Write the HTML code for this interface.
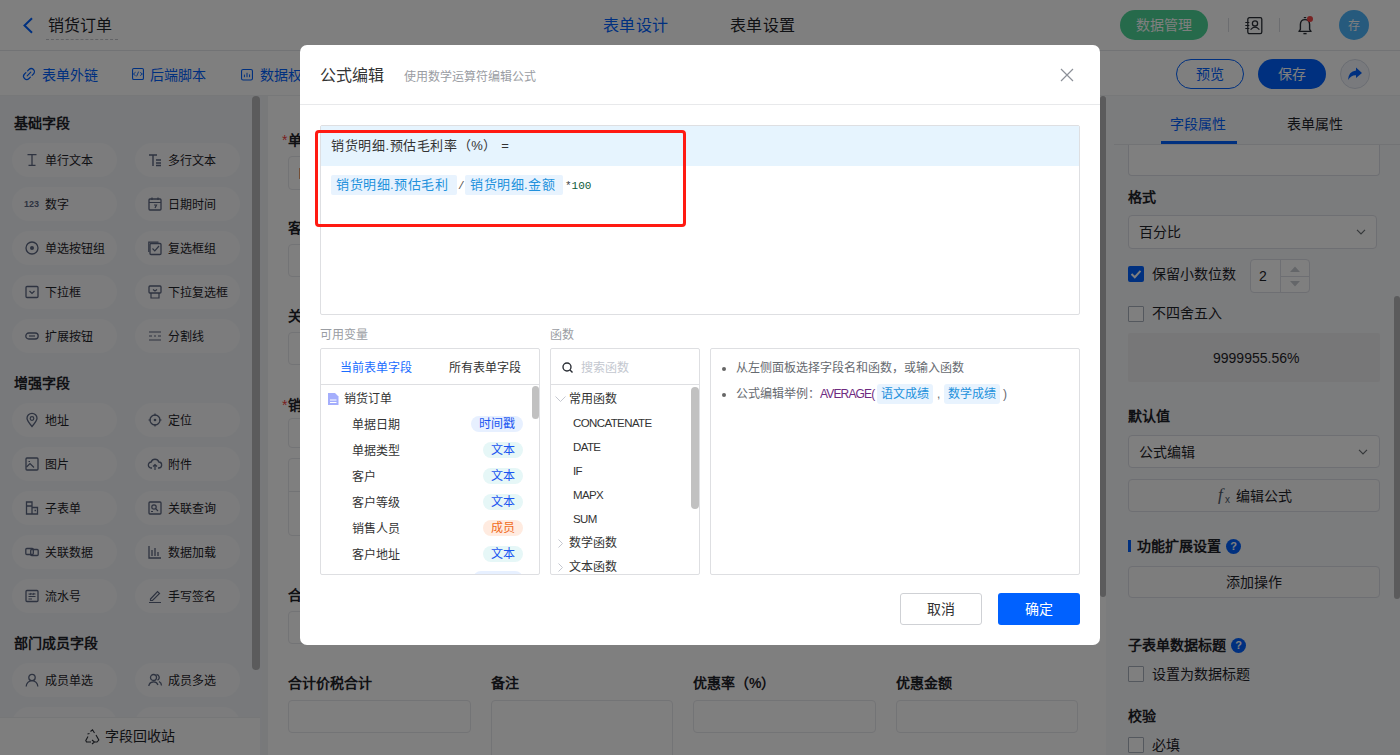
<!DOCTYPE html>
<html lang="zh-CN"><head><meta charset="utf-8">
<style>
*{box-sizing:border-box;margin:0;padding:0}
html,body{width:1400px;height:755px;overflow:hidden;background:#fff;font-family:"Liberation Sans",sans-serif;color:#1f2329}
#app{position:absolute;left:0;top:0;width:1400px;height:755px;background:#fff}
.a{position:absolute}
.t{position:absolute;white-space:nowrap;height:20px;line-height:20px}
#hdr{position:absolute;left:0;top:0;width:1400px;height:51px;background:#fff;border-bottom:1px solid #e4e6ea}
#tb{position:absolute;left:0;top:51px;width:1400px;height:45px;background:#fff;border-bottom:1px solid #eef0f2}
#left{position:absolute;left:0;top:96px;width:262px;height:659px;background:#f1f3f6}
#gap{position:absolute;left:262px;top:96px;width:6px;height:659px;background:#f0f2f5}
#center{position:absolute;left:268px;top:96px;width:838px;height:659px;background:#fff}
#right{position:absolute;left:1106px;top:96px;width:294px;height:659px;background:#f7f8fa}
#mask{position:absolute;left:0;top:0;width:1400px;height:755px;background:rgba(0,0,0,0.5)}
#modal{position:absolute;left:300px;top:45px;width:800px;height:600px;background:#fff;border-radius:7px}
.pill{position:absolute;width:105px;height:34px;border-radius:17px;background:#f8f9fb}
.pill .ic{position:absolute;left:13px;top:10px;width:14px;height:14px}
.pill .tx{position:absolute;left:33px;top:8px;height:20px;line-height:20px;font-size:12px;color:#1f2329;white-space:nowrap}
.sec{position:absolute;left:14px;font-size:14px;font-weight:bold;color:#1f2329;height:20px;line-height:20px}
.lbl{position:absolute;font-size:14px;font-weight:bold;color:#1f2329;height:20px;line-height:20px;white-space:nowrap}
.inp{position:absolute;border:1px solid #e6e8ec;border-radius:4px;background:#fff}
.rinp{position:absolute;border:1px solid #dcdfe6;border-radius:4px;background:#fff}
.cb{position:absolute;left:1128px;width:16px;height:16px;border:1px solid #a9b0bd;border-radius:1px;background:#fff}
svg{position:absolute;overflow:visible}
</style></head><body>
<div id="app">
  <div id="hdr">
    <svg class="a" style="left:22px;top:17px" width="12" height="16" viewBox="0 0 12 16"><path d="M10 1.2 L2.5 8.5 L10 15.8" fill="none" stroke="#0061ff" stroke-width="2"/></svg>
    <div class="t" style="left:48px;top:16px;font-size:16px;color:#1f2329">销货订单</div>
    <div class="a" style="left:46px;top:39px;width:72px;border-top:1px dashed #c4c6cc"></div>
    <div class="t" style="left:603px;top:16px;font-size:16px;letter-spacing:0.3px;color:#0061ff">表单设计</div>
    <div class="t" style="left:730px;top:16px;font-size:16px;letter-spacing:0.3px;color:#1f2329">表单设置</div>
    <div class="a" style="left:1120px;top:10px;width:88px;height:30px;border-radius:15px;background:#4cd497"></div>
    <div class="t" style="left:1136px;top:15px;font-size:14px;color:#fff">数据管理</div>
    <div class="a" style="left:1228px;top:18px;width:1px;height:14px;background:#d9dbe0"></div>
    <svg style="left:1245px;top:17px" width="18" height="18" viewBox="0 0 18 18"><rect x="2.8" y="0.7" width="14" height="16" rx="1.6" fill="none" stroke="#2b2f36" stroke-width="1.3"/><circle cx="10" cy="6.4" r="2.6" fill="none" stroke="#2b2f36" stroke-width="1.3"/><path d="M5.6 12.6 Q10 7.6 14.4 12.6" fill="none" stroke="#2b2f36" stroke-width="1.3"/><path d="M0.3 5.5H4.3M0.3 8.5H4.3M0.3 11.5H4.3" stroke="#2b2f36" stroke-width="1.1"/></svg>
    <div class="a" style="left:1279px;top:18px;width:1px;height:14px;background:#d9dbe0"></div>
    <svg style="left:1297px;top:16px" width="16" height="19" viewBox="0 0 16 19"><path d="M2 15.4 H14 L12.6 13.3 V8.6 Q12.6 3.6 8 3.6 Q3.4 3.6 3.4 8.6 V13.3 Z" fill="none" stroke="#2b2f36" stroke-width="1.4" stroke-linejoin="round"/><path d="M6.4 17.6 H9.6" stroke="#2b2f36" stroke-width="1.4"/><path d="M6.8 1.6 H9.2" stroke="#2b2f36" stroke-width="1.2"/><circle cx="13" cy="3" r="3" fill="#f04646"/></svg>
    <div class="a" style="left:1339px;top:10px;width:30px;height:30px;border-radius:15px;background:#4cb4fb"></div>
    <div class="t" style="left:1348px;top:16px;font-size:12px;color:#fff">存</div>
  </div>
  <div id="tb">
    <svg style="left:22px;top:16px" width="14" height="14" viewBox="0 0 14 14"><path d="M5.6 3.9 L7 2.5 A3.1 3.1 0 0 1 11.5 7 L10.1 8.4 M8.4 10.1 L7 11.5 A3.1 3.1 0 0 1 2.5 7 L3.9 5.6 M5.2 8.8 L8.8 5.2" fill="none" stroke="#0061ff" stroke-width="1.15" stroke-linecap="round"/></svg>
    <div class="t" style="left:42px;top:14px;font-size:14px;color:#0061ff">表单外链</div>
    <svg style="left:132px;top:17px" width="12" height="12" viewBox="0 0 12 12"><rect x="0.55" y="0.55" width="10.9" height="10.9" rx="1.3" fill="none" stroke="#0061ff" stroke-width="1.1"/><path d="M3.6 4.2 L1.4 6 L3.6 7.8 M4.6 8.4 L6.6 3.6 M8.2 4.4 L10.4 6 L8.2 7.6" fill="none" stroke="#0061ff" stroke-width="0.9"/></svg>
    <div class="t" style="left:150px;top:14px;font-size:14px;color:#0061ff">后端脚本</div>
    <svg style="left:241px;top:18px" width="12" height="12" viewBox="0 0 12 12"><rect x="0.55" y="0.55" width="10.9" height="10.4" rx="1.5" fill="none" stroke="#0061ff" stroke-width="1.1"/><path d="M3.4 8.2V5.6M6 8.2V3.8M8.6 8.2V5.4" stroke="#0061ff" stroke-width="1"/></svg>
    <div class="t" style="left:260px;top:14px;font-size:14px;color:#0061ff">数据权限</div>
    <div class="a" style="left:1176px;top:8px;width:68px;height:30px;border-radius:15px;border:1px solid #0061ff;background:#fff"></div>
    <div class="t" style="left:1196px;top:13px;font-size:14px;color:#0061ff">预览</div>
    <div class="a" style="left:1258px;top:8px;width:68px;height:30px;border-radius:15px;background:#0061ff"></div>
    <div class="t" style="left:1278px;top:13px;font-size:14px;color:#fff">保存</div>
    <div class="a" style="left:1340px;top:8px;width:30px;height:30px;border-radius:15px;border:1px solid #d6dbe6;background:#f2f5fa"></div>
    <svg style="left:1347px;top:16px" width="16" height="14" viewBox="0 0 16 14"><path d="M9 0.5 L15 6 L9 11 V8.2 Q4 8 1 13 Q1.5 4.5 9 3.6 Z" fill="#0061ff"/></svg>
  </div>
  <div id="left">
    <div class="sec" style="top:17px">基础字段</div>
    <div class="pill" style="left:12px;top:47px"><svg class="ic" viewBox="0 0 14 14"><path d="M2.5 1.6H11.5M3.5 12.4H10.5M7 1.6V12.4" stroke="#5c6680" stroke-width="1.3" fill="none"/></svg><div class="tx">单行文本</div></div>
    <div class="pill" style="left:135px;top:47px"><svg class="ic" viewBox="0 0 14 14"><path d="M1 2H9M5 2V13M8 7H13M8 10H13M8 12.5H13" stroke="#5c6680" stroke-width="1.4" fill="none"/></svg><div class="tx">多行文本</div></div>
    <div class="pill" style="left:12px;top:91px"><div class="a" style="left:12px;top:9px;font-size:9px;font-weight:bold;color:#5c6680;line-height:16px">123</div><div class="tx">数字</div></div>
    <div class="pill" style="left:135px;top:91px"><svg class="ic" viewBox="0 0 14 14"><rect x="1" y="2" width="12" height="11" rx="1" stroke="#5c6680" stroke-width="1.3" fill="none"/><path d="M1 5.5H13M4 0.5V3M10 0.5V3M6 8H8.5L7 11" stroke="#5c6680" stroke-width="1.2" fill="none"/></svg><div class="tx">日期时间</div></div>
    <div class="pill" style="left:12px;top:135px"><svg class="ic" viewBox="0 0 14 14"><circle cx="7" cy="7" r="6" stroke="#5c6680" stroke-width="1.3" fill="none"/><circle cx="7" cy="7" r="2" fill="#5c6680"/></svg><div class="tx">单选按钮组</div></div>
    <div class="pill" style="left:135px;top:135px"><svg class="ic" viewBox="0 0 14 14"><rect x="2" y="2.5" width="11" height="11" rx="1" stroke="#5c6680" stroke-width="1.3" fill="none"/><path d="M0.8 11V1.2H10.5M4.5 7.5L6.8 9.8L11 5" stroke="#5c6680" stroke-width="1.2" fill="none"/></svg><div class="tx">复选框组</div></div>
    <div class="pill" style="left:12px;top:179px"><svg class="ic" viewBox="0 0 14 14"><rect x="1" y="1.5" width="12" height="11" rx="1" stroke="#5c6680" stroke-width="1.3" fill="none"/><path d="M4.5 6L7 8.5L9.5 6" stroke="#5c6680" stroke-width="1.2" fill="none"/></svg><div class="tx">下拉框</div></div>
    <div class="pill" style="left:135px;top:179px"><svg class="ic" viewBox="0 0 14 14"><rect x="1" y="1" width="12" height="7" rx="1" stroke="#5c6680" stroke-width="1.3" fill="none"/><path d="M3 8V13H11V8M5 4.5L7 6L9 4.5" stroke="#5c6680" stroke-width="1.2" fill="none"/></svg><div class="tx">下拉复选框</div></div>
    <div class="pill" style="left:12px;top:223px"><svg class="ic" viewBox="0 0 14 14"><rect x="0.8" y="4" width="12.4" height="6" rx="3" stroke="#5c6680" stroke-width="1.3" fill="none"/><path d="M4 7H10" stroke="#5c6680" stroke-width="1.2"/></svg><div class="tx">扩展按钮</div></div>
    <div class="pill" style="left:135px;top:223px"><svg class="ic" viewBox="0 0 14 14"><path d="M1 3H13M1 7H4M6 7H8M10 7H13M1 11H13" stroke="#5c6680" stroke-width="1.2"/></svg><div class="tx">分割线</div></div>

    <div class="sec" style="top:277px">增强字段</div>
    <div class="pill" style="left:12px;top:307px"><svg class="ic" viewBox="0 0 14 14"><path d="M7 13.5C3.5 9.5 2 7.5 2 5.3A5 5 0 0 1 12 5.3C12 7.5 10.5 9.5 7 13.5Z" stroke="#5c6680" stroke-width="1.3" fill="none"/><circle cx="7" cy="5.5" r="1.8" stroke="#5c6680" stroke-width="1.2" fill="none"/></svg><div class="tx">地址</div></div>
    <div class="pill" style="left:135px;top:307px"><svg class="ic" viewBox="0 0 14 14"><circle cx="7" cy="7" r="5" stroke="#5c6680" stroke-width="1.3" fill="none"/><circle cx="7" cy="7" r="1.3" fill="#5c6680"/><path d="M7 0.5V3M7 11V13.5M0.5 7H3M11 7H13.5" stroke="#5c6680" stroke-width="1.2"/></svg><div class="tx">定位</div></div>
    <div class="pill" style="left:12px;top:351px"><svg class="ic" viewBox="0 0 14 14"><rect x="1" y="1" width="12" height="12" rx="1" stroke="#5c6680" stroke-width="1.3" fill="none"/><path d="M1.5 10L5 6.5L9 10.5M3.5 4.5H5" stroke="#5c6680" stroke-width="1.2" fill="none"/></svg><div class="tx">图片</div></div>
    <div class="pill" style="left:135px;top:351px"><svg class="ic" viewBox="0 0 14 14"><path d="M4 11H3.5A3 3 0 0 1 3.2 5A4 4 0 0 1 10.8 5A3 3 0 0 1 10.5 11H10" stroke="#5c6680" stroke-width="1.3" fill="none"/><path d="M7 13V7.5M5 9.5L7 7.5L9 9.5" stroke="#5c6680" stroke-width="1.2" fill="none"/></svg><div class="tx">附件</div></div>
    <div class="pill" style="left:12px;top:395px"><svg class="ic" viewBox="0 0 14 14"><path d="M1.5 1V13H7V1ZM1.5 5H7M7 6.5H12.5V13H7M9.5 9.5H11" stroke="#5c6680" stroke-width="1.3" fill="none"/></svg><div class="tx">子表单</div></div>
    <div class="pill" style="left:135px;top:395px"><svg class="ic" viewBox="0 0 14 14"><rect x="1" y="1" width="12" height="12" rx="1" stroke="#5c6680" stroke-width="1.3" fill="none"/><circle cx="6" cy="6" r="2.2" stroke="#5c6680" stroke-width="1.2" fill="none"/><path d="M7.6 7.6L10 10M3 10.5H5" stroke="#5c6680" stroke-width="1.2"/></svg><div class="tx">关联查询</div></div>
    <div class="pill" style="left:12px;top:439px"><svg class="ic" viewBox="0 0 14 14"><rect x="0.8" y="3.5" width="7.5" height="6" rx="1" stroke="#5c6680" stroke-width="1.3" fill="none"/><rect x="5.7" y="4.5" width="7.5" height="6" rx="1" stroke="#5c6680" stroke-width="1.3" fill="none"/></svg><div class="tx">关联数据</div></div>
    <div class="pill" style="left:135px;top:439px"><svg class="ic" viewBox="0 0 14 14"><path d="M1 1V13H13M4 11V5M7 11V3M10 11V7" stroke="#5c6680" stroke-width="1.3" fill="none"/></svg><div class="tx">数据加载</div></div>
    <div class="pill" style="left:12px;top:483px"><svg class="ic" viewBox="0 0 14 14"><rect x="1" y="1.5" width="12" height="11" rx="1" stroke="#5c6680" stroke-width="1.3" fill="none"/><path d="M3.5 5H10.5M3.5 7.5H10.5M3.5 10H7M9 4L8 6M6 4L5 6" stroke="#5c6680" stroke-width="1.1"/></svg><div class="tx">流水号</div></div>
    <div class="pill" style="left:135px;top:483px"><svg class="ic" viewBox="0 0 14 14"><path d="M2.5 10L9.5 2.5L11.5 4.5L4.5 11.5H2.5ZM1 13.5H13" stroke="#5c6680" stroke-width="1.2" fill="none"/></svg><div class="tx">手写签名</div></div>

    <div class="sec" style="top:537px">部门成员字段</div>
    <div class="pill" style="left:12px;top:567px"><svg class="ic" viewBox="0 0 14 14"><circle cx="7" cy="4.5" r="3.2" stroke="#5c6680" stroke-width="1.3" fill="none"/><path d="M1.2 13.5A5.8 5.8 0 0 1 12.8 13.5" stroke="#5c6680" stroke-width="1.3" fill="none"/></svg><div class="tx">成员单选</div></div>
    <div class="pill" style="left:135px;top:567px"><svg class="ic" viewBox="0 0 14 14"><circle cx="5.5" cy="4.5" r="3" stroke="#5c6680" stroke-width="1.3" fill="none"/><path d="M0.8 13A4.8 4.8 0 0 1 10 12M8.5 1.5A3 3 0 0 1 9.5 7.2M11 8.5A4.5 4.5 0 0 1 13.5 12.5" stroke="#5c6680" stroke-width="1.3" fill="none"/></svg><div class="tx">成员多选</div></div>
    <div class="pill" style="left:12px;top:611px"></div>
    <div class="pill" style="left:135px;top:611px"></div>
    <div class="a" style="left:0;top:621px;width:260px;height:38px;background:#fcfcfd;border-top:1px solid #eceef1"></div>
    <svg style="left:85px;top:633px" width="15" height="14" viewBox="0 0 15 14"><path d="M5.5 2.5L7.5 0.8L9.5 4M11 6L13.8 11L12 13H9.5M6 13H1.5L0.8 11.5L3 7.5M4.5 4.5L2.5 5M7 11L9.5 13L7 15" stroke="#2b2f36" stroke-width="1.1" fill="none"/></svg>
    <div class="t" style="left:105px;top:630px;font-size:14px;color:#1f2329">字段回收站</div>
    <div class="a" style="left:252px;top:0;width:8px;height:574px;border-radius:4px;background:#b6b6b8"></div>
  </div>
  <div id="gap"></div>
  <div id="center">
    <div class="t" style="left:14px;top:34px;font-size:14px;color:#f53f3f">*</div>
    <div class="lbl" style="left:20px;top:34px">单据日期</div>
    <div class="inp" style="left:20px;top:60px;width:400px;height:34px"></div>
    <div class="a" style="left:31px;top:72px;width:1px;height:11px;background:#e8a070"></div>
    <div class="lbl" style="left:20px;top:122px">客户</div>
    <div class="inp" style="left:20px;top:148px;width:400px;height:33px"></div>
    <div class="lbl" style="left:20px;top:210px">关联查询</div>
    <div class="inp" style="left:20px;top:236px;width:400px;height:33px"></div>
    <div class="t" style="left:14px;top:299px;font-size:14px;color:#f53f3f">*</div>
    <div class="lbl" style="left:20px;top:299px">销货明细</div>
    <div class="inp" style="left:20px;top:322px;width:790px;height:30px"></div>
    <div class="inp" style="left:20px;top:362px;width:790px;height:78px"></div>
    <div class="a" style="left:21px;top:395px;width:788px;height:1px;background:#e5e6eb"></div>
    <div class="lbl" style="left:20px;top:489px">合计金额</div>
    <div class="inp" style="left:20px;top:515px;width:182px;height:33px"></div>
    <div class="lbl" style="left:20px;top:577px">合计价税合计</div>
    <div class="inp" style="left:20px;top:604px;width:183px;height:33px"></div>
    <div class="lbl" style="left:223px;top:577px">备注</div>
    <div class="inp" style="left:223px;top:604px;width:182px;height:70px"></div>
    <div class="lbl" style="left:425px;top:577px">优惠率（%）</div>
    <div class="inp" style="left:425px;top:604px;width:183px;height:33px"></div>
    <div class="lbl" style="left:628px;top:577px">优惠金额</div>
    <div class="inp" style="left:628px;top:604px;width:182px;height:33px"></div>
    <div class="a" style="left:832px;top:0;width:6px;height:501px;border-radius:3px;background:#b6b6b8"></div>
  </div>
  <div id="right">
    <div class="a" style="left:8px;top:48px;width:286px;height:1px;background:#e4e6ea"></div>
    <div class="t" style="left:64px;top:18px;font-size:14px;color:#0061ff">字段属性</div>
    <div class="a" style="left:55px;top:45px;width:76px;height:3px;background:#0061ff"></div>
    <div class="t" style="left:181px;top:18px;font-size:14px;color:#1f2329">表单属性</div>
    <div class="rinp" style="left:22px;top:49px;width:252px;height:31px;border-top:none;border-radius:0 0 4px 4px"></div>
    <div class="lbl" style="left:22px;top:91px">格式</div>
    <div class="rinp" style="left:22px;top:119px;width:249px;height:34px"></div>
    <div class="t" style="left:33px;top:126px;font-size:14px;color:#1f2329">百分比</div>
    <svg style="left:250px;top:133px" width="10" height="6" viewBox="0 0 10 6"><path d="M1 0.8L5 4.8L9 0.8" stroke="#6b7075" stroke-width="1.2" fill="none"/></svg>
    <div class="a" style="left:22px;top:170px;width:16px;height:16px;border-radius:2px;background:#0061ff"></div>
    <svg style="left:22px;top:170px" width="16" height="16" viewBox="0 0 16 16"><path d="M3.5 8L6.8 11.2L12.5 4.8" stroke="#fff" stroke-width="2" fill="none"/></svg>
    <div class="t" style="left:46px;top:168px;font-size:14px;color:#1f2329">保留小数位数</div>
    <div class="rinp" style="left:144px;top:163px;width:60px;height:34px"></div>
    <div class="a" style="left:174px;top:164px;width:1px;height:32px;background:#dcdfe6"></div>
    <div class="a" style="left:175px;top:180px;width:28px;height:1px;background:#dcdfe6"></div>
    <div class="t" style="left:153px;top:170px;font-size:14px;color:#1f2329">2</div>
    <svg style="left:184px;top:170px" width="10" height="6" viewBox="0 0 10 6"><path d="M0 6L5 0.5L10 6Z" fill="#c9ccd2"/></svg>
    <svg style="left:184px;top:185px" width="10" height="6" viewBox="0 0 10 6"><path d="M0 0L5 5.5L10 0Z" fill="#c9ccd2"/></svg>
    <div class="cb" style="left:22px;top:210px"></div>
    <div class="t" style="left:46px;top:207px;font-size:14px;color:#1f2329">不四舍五入</div>
    <div class="a" style="left:22px;top:237px;width:252px;height:49px;border-radius:2px;background:#efeff0"></div>
    <div class="t" style="left:107px;top:252px;font-size:14px;color:#1f2329">9999955.56%</div>
    <div class="lbl" style="left:22px;top:310px">默认值</div>
    <div class="rinp" style="left:22px;top:339px;width:252px;height:33px"></div>
    <div class="t" style="left:33px;top:346px;font-size:14px;color:#1f2329">公式编辑</div>
    <svg style="left:252px;top:353px" width="10" height="6" viewBox="0 0 10 6"><path d="M1 0.8L5 4.8L9 0.8" stroke="#6b7075" stroke-width="1.2" fill="none"/></svg>
    <div class="rinp" style="left:22px;top:383px;width:252px;height:33px;background:#fafafa"></div>
    <div class="t" style="left:112px;top:389px;font-size:17px;font-style:italic;font-family:'Liberation Serif',serif;color:#4e5969">f</div><div class="t" style="left:119px;top:394px;font-size:10px;font-family:'Liberation Sans',sans-serif;color:#4e5969">x</div>
    <div class="t" style="left:130px;top:390px;font-size:14px;color:#1f2329">编辑公式</div>
    <div class="a" style="left:22px;top:444px;width:3px;height:12px;background:#0061ff"></div>
    <div class="lbl" style="left:31px;top:440px">功能扩展设置</div>
    <div class="a" style="left:120px;top:443px;width:15px;height:15px;border-radius:8px;background:#0061ff;color:#fff;font-size:11px;font-weight:bold;line-height:15px;text-align:center">?</div>
    <div class="rinp" style="left:22px;top:470px;width:252px;height:32px;background:#fafafa"></div>
    <div class="t" style="left:120px;top:476px;font-size:14px;color:#1f2329">添加操作</div>
    <div class="lbl" style="left:22px;top:539px">子表单数据标题</div>
    <div class="a" style="left:125px;top:542px;width:15px;height:15px;border-radius:8px;background:#0061ff;color:#fff;font-size:11px;font-weight:bold;line-height:15px;text-align:center">?</div>
    <div class="cb" style="left:22px;top:570px"></div>
    <div class="t" style="left:46px;top:568px;font-size:14px;color:#1f2329">设置为数据标题</div>
    <div class="lbl" style="left:22px;top:610px">校验</div>
    <div class="cb" style="left:22px;top:641px"></div>
    <div class="t" style="left:46px;top:639px;font-size:14px;color:#1f2329">必填</div>
    <div class="a" style="left:288px;top:200px;width:6px;height:303px;border-radius:3px;background:#b6b6b8"></div>
  </div>
</div>
<div id="mask"></div>
<div id="modal">
  <div class="t" style="left:20px;top:21px;font-size:16px;color:#333">公式编辑</div>
  <div class="t" style="left:104px;top:22px;font-size:12px;color:#9a9da3">使用数学运算符编辑公式</div>
  <svg style="left:760px;top:23px" width="14" height="14" viewBox="0 0 14 14"><path d="M1 1L13 13M13 1L1 13" stroke="#8c9098" stroke-width="1.2"/></svg>
  <div class="a" style="left:0;top:59px;width:800px;height:1px;background:#e8e9eb"></div>

  <div class="a" style="left:20px;top:80px;width:760px;height:190px;border:1px solid #dedfe2;border-radius:2px"></div>
  <div class="a" style="left:21px;top:81px;width:758px;height:40px;background:#e6f4fe"></div>
  <div class="t" style="left:31px;top:91px;font-size:13px;letter-spacing:0.6px;color:#333">销货明细.预估毛利率（%）&nbsp;=</div>
  <div class="a" style="left:31px;top:130px;width:126px;height:20px;border-radius:2px;background:#e8f3fe"></div>
  <div class="t" style="left:36px;top:130px;font-size:13px;letter-spacing:0.5px;color:#2291dc">销货明细.预估毛利</div>
  <div class="t" style="left:158px;top:131px;font-size:11px;color:#555;font-family:'Liberation Mono',monospace">/</div>
  <div class="a" style="left:165px;top:130px;width:98px;height:20px;border-radius:2px;background:#e8f3fe"></div>
  <div class="t" style="left:170px;top:130px;font-size:13px;letter-spacing:0.5px;color:#2291dc">销货明细.金额</div>
  <div class="t" style="left:265px;top:131px;font-size:11px;color:#0b5a3a;font-family:'Liberation Mono',monospace"><span style="color:#444">*</span>100</div>
  <div class="a" style="left:15px;top:85px;width:371px;height:97px;border:3px solid #ff1a12;border-radius:4px"></div>

  <div class="t" style="left:20px;top:280px;font-size:12px;color:#9a9da3">可用变量</div>
  <div class="t" style="left:250px;top:280px;font-size:12px;color:#9a9da3">函数</div>

  <div class="a" style="left:20px;top:303px;width:220px;height:227px;border:1px solid #dedfe2;border-radius:2px;overflow:hidden">
    <div class="t" style="left:19px;top:9px;font-size:12px;color:#1a6dff">当前表单字段</div>
    <div class="t" style="left:128px;top:9px;font-size:12px;color:#333">所有表单字段</div>
    <div class="a" style="left:0;top:35px;width:220px;height:1px;background:#dedfe2"></div>
    <svg style="left:7px;top:44px" width="11" height="12" viewBox="0 0 11 12"><path d="M0 0H7L10.5 3.5V12H0Z" fill="#a4aefc"/><path d="M2 7H8.5M2 9.5H8.5" stroke="#fff" stroke-width="1.1"/></svg>
    <div class="t" style="left:23px;top:40px;font-size:12px;color:#333">销货订单</div>
    <div class="t" style="left:31px;top:66px;font-size:12px;color:#333">单据日期</div>
    <div class="a" style="left:150px;top:67px;width:52px;height:16px;border-radius:8px;background:#e7f0ff"></div>
    <div class="t" style="left:158px;top:65px;font-size:12px;color:#1a55f0">时间戳</div>
    <div class="t" style="left:31px;top:92px;font-size:12px;color:#333">单据类型</div>
    <div class="a" style="left:162px;top:93px;width:40px;height:16px;border-radius:8px;background:#e6f7f7"></div>
    <div class="t" style="left:170px;top:91px;font-size:12px;color:#1a55f0">文本</div>
    <div class="t" style="left:31px;top:118px;font-size:12px;color:#333">客户</div>
    <div class="a" style="left:162px;top:119px;width:40px;height:16px;border-radius:8px;background:#e6f7f7"></div>
    <div class="t" style="left:170px;top:117px;font-size:12px;color:#1a55f0">文本</div>
    <div class="t" style="left:31px;top:144px;font-size:12px;color:#333">客户等级</div>
    <div class="a" style="left:162px;top:145px;width:40px;height:16px;border-radius:8px;background:#e6f7f7"></div>
    <div class="t" style="left:170px;top:143px;font-size:12px;color:#1a55f0">文本</div>
    <div class="t" style="left:31px;top:170px;font-size:12px;color:#333">销售人员</div>
    <div class="a" style="left:162px;top:171px;width:40px;height:16px;border-radius:8px;background:#ffebe0"></div>
    <div class="t" style="left:170px;top:169px;font-size:12px;color:#f06a20">成员</div>
    <div class="t" style="left:31px;top:196px;font-size:12px;color:#333">客户地址</div>
    <div class="a" style="left:162px;top:197px;width:40px;height:16px;border-radius:8px;background:#e6f7f7"></div>
    <div class="t" style="left:170px;top:195px;font-size:12px;color:#1a55f0">文本</div>
    <div class="a" style="left:152px;top:222px;width:50px;height:16px;border-radius:8px;background:#e7f0ff"></div>
    <div class="a" style="left:211px;top:37px;width:7px;height:33px;border-radius:4px;background:#c1c1c1"></div>
  </div>

  <div class="a" style="left:250px;top:303px;width:150px;height:227px;border:1px solid #dedfe2;border-radius:2px;overflow:hidden">
    <svg style="left:11px;top:13px" width="11" height="11" viewBox="0 0 11 11"><circle cx="5" cy="5" r="4" stroke="#2b2f36" stroke-width="1.4" fill="none"/><path d="M8 8L10.5 10.5" stroke="#2b2f36" stroke-width="1.4"/></svg>
    <div class="t" style="left:30px;top:9px;font-size:12px;color:#c3c7cf">搜索函数</div>
    <div class="a" style="left:0;top:35px;width:150px;height:1px;background:#dedfe2"></div>
    <svg style="left:4px;top:47px" width="11" height="7" viewBox="0 0 11 7"><path d="M0.5 0.5L5.5 5.5L10.5 0.5" stroke="#c5c8d0" stroke-width="1" fill="none"/></svg>
    <div class="t" style="left:18px;top:40px;font-size:12px;color:#333">常用函数</div>
    <div class="t" style="left:22px;top:64px;font-size:11.5px;letter-spacing:-0.6px;color:#333">CONCATENATE</div>
    <div class="t" style="left:22px;top:88px;font-size:11.5px;letter-spacing:-0.6px;color:#333">DATE</div>
    <div class="t" style="left:22px;top:112px;font-size:11.5px;letter-spacing:-0.6px;color:#333">IF</div>
    <div class="t" style="left:22px;top:136px;font-size:11.5px;letter-spacing:-0.6px;color:#333">MAPX</div>
    <div class="t" style="left:22px;top:160px;font-size:11.5px;letter-spacing:-0.6px;color:#333">SUM</div>
    <svg style="left:7px;top:190px" width="5" height="9" viewBox="0 0 5 9"><path d="M0.5 0.5L4.5 4.5L0.5 8.5" stroke="#c5c8d0" stroke-width="1" fill="none"/></svg>
    <div class="t" style="left:18px;top:184px;font-size:12px;color:#333">数学函数</div>
    <svg style="left:7px;top:214px" width="5" height="9" viewBox="0 0 5 9"><path d="M0.5 0.5L4.5 4.5L0.5 8.5" stroke="#c5c8d0" stroke-width="1" fill="none"/></svg>
    <div class="t" style="left:18px;top:208px;font-size:12px;color:#333">文本函数</div>
    <div class="a" style="left:140px;top:38px;width:8px;height:122px;border-radius:4px;background:#c1c1c1"></div>
  </div>

  <div class="a" style="left:410px;top:303px;width:370px;height:227px;border:1px solid #dedfe2;border-radius:2px">
    <div class="a" style="left:11px;top:18px;width:4px;height:4px;border-radius:2px;background:#666"></div>
    <div class="t" style="left:25px;top:9px;font-size:12px;color:#666a70">从左侧面板选择字段名和函数，或输入函数</div>
    <div class="a" style="left:11px;top:44px;width:4px;height:4px;border-radius:2px;background:#666"></div>
    <div class="t" style="left:25px;top:35px;font-size:12px;color:#666a70">公式编辑举例：<span style="color:#6e2a80;letter-spacing:-0.85px">AVERAGE(</span></div>
    <div class="a" style="left:166px;top:35px;width:56px;height:20px;border-radius:3px;background:#e8f3fe"></div>
    <div class="t" style="left:170px;top:35px;font-size:12px;color:#2291dc">语文成绩</div>
    <div class="t" style="left:226px;top:35px;font-size:12px;color:#666a70">,</div>
    <div class="a" style="left:233px;top:35px;width:56px;height:20px;border-radius:3px;background:#e8f3fe"></div>
    <div class="t" style="left:237px;top:35px;font-size:12px;color:#2291dc">数学成绩</div>
    <div class="t" style="left:292px;top:35px;font-size:12px;color:#666a70">)</div>
  </div>

  <div class="a" style="left:600px;top:548px;width:82px;height:32px;border:1px solid #cfd1d5;border-radius:3px;background:#fff"></div>
  <div class="t" style="left:627px;top:554px;font-size:14px;color:#333">取消</div>
  <div class="a" style="left:698px;top:548px;width:82px;height:32px;border-radius:3px;background:#0061ff"></div>
  <div class="t" style="left:725px;top:554px;font-size:14px;color:#fff">确定</div>
</div>
</body></html>
